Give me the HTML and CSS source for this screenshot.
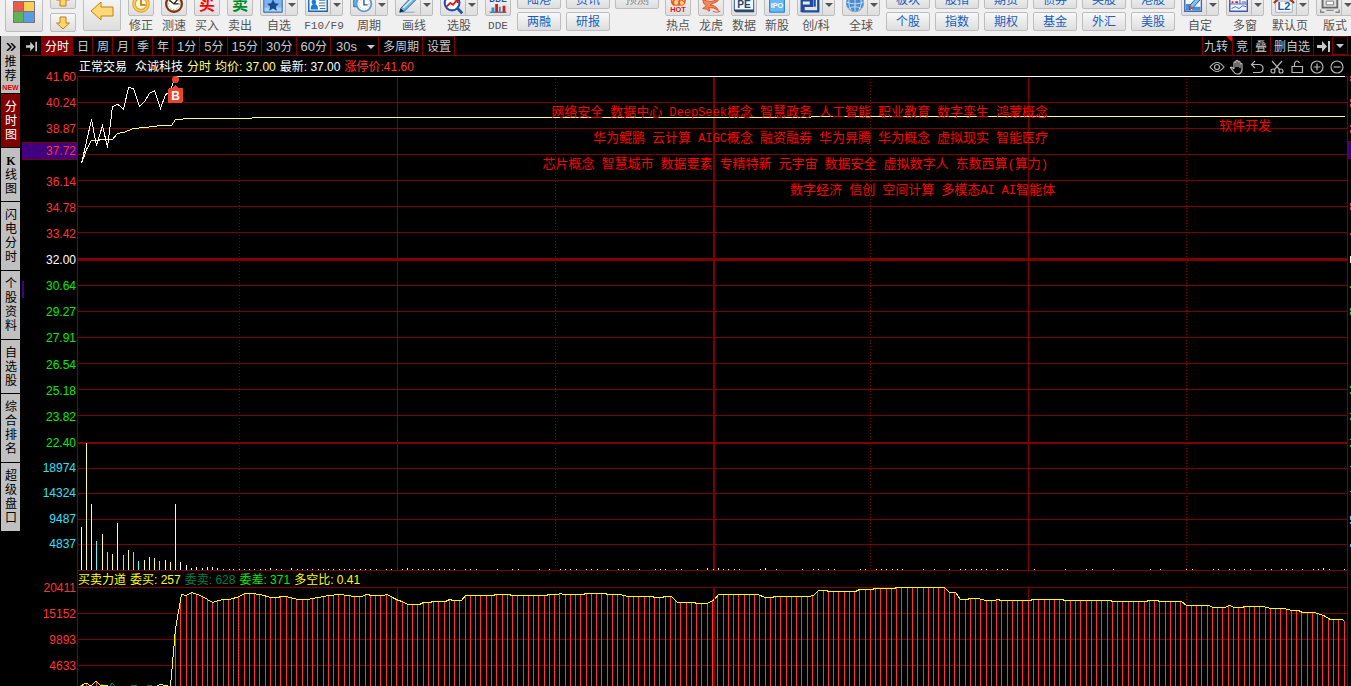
FILE: index.html
```html
<!DOCTYPE html>
<html lang="zh-CN">
<head>
<meta charset="utf-8">
<title>众诚科技 分时</title>
<link rel="stylesheet" href="styles.css">
</head>
<body>
<header class="toolbar">
  <button class="tile tile-home" aria-label="主页"><svg width="22" height="22" viewBox="0 0 22 22"><path d="M0 0h22v22H0z" fill="#777"/><path d="M1 1h9v9H1z" fill="#ea5a4e"/><path d="M11 1h10v9H11z" fill="#fbd154"/><path d="M1 11h9v10H1z" fill="#62b154"/><path d="M11 11h10v10H11z" fill="#5b9be6"/></svg></button>
  <div class="pager">
    <button class="tile tile-small" aria-label="上"><svg width="16" height="14" viewBox="0 0 16 14"><path d="M8 1l6.500 6H11v6H5V7H1.500z" fill="#fdd56a" stroke="#c07f14"/></svg></button>
    <button class="tile tile-small" aria-label="下"><svg width="16" height="14" viewBox="0 0 16 14"><path d="M8 13l6.500-6H11V1H5v6H1.500z" fill="#fdd56a" stroke="#c07f14"/></svg></button>
  </div>
  <button class="tile tile-back" aria-label="返回"><svg width="24" height="20" viewBox="0 0 24 20"><path d="M1 10L11 1v5h12v9H11v4z" fill="#fdd978" stroke="#c07f14"/></svg></button>

  <button class="tool"><span class="icon"><svg viewBox="0 0 26 26"><circle cx="13" cy="14" r="7.500" fill="#fff6d8" stroke="#dc9a1e" stroke-width="4"/><circle cx="13" cy="14" r="7.500" fill="none" stroke="#f8cc60" stroke-width="2"/><path d="M13 8v7h5" fill="none" stroke="#c8821a" stroke-width="2"/></svg></span>修正</button>
  <button class="tool"><span class="icon"><svg viewBox="0 0 26 26"><circle cx="13" cy="14" r="8.500" fill="#fffdf4" stroke="#7b3514" stroke-width="2.500"/><circle cx="13" cy="14" r="6" fill="none" stroke="#888" stroke-dasharray="1 2"/><path d="M8 10l5 4h5M13 14l4-5" fill="none" stroke="#222" stroke-width="1.500"/></svg></span>测速</button>
  <button class="tool"><span class="icon"><b class="glyph red">买</b></span>买入</button>
  <button class="tool"><span class="icon"><b class="glyph green">卖</b></span>卖出</button>
  <button class="tool wide"><span class="icon"><svg viewBox="0 0 26 26"><path d="M3 5h20v18H3z" fill="#7fb5ee" stroke="#2a5c9c"/><path d="M4 18h18v4H4z" fill="#a8d0f8"/><path d="M13 9l2 4.300 4.500.5-3.400 3 1 4.500-4.100-2.300-4.100 2.300 1-4.500-3.400-3 4.500-.5z" fill="#164a8c"/></svg><i></i></span>自选</button>
  <button class="tool wide"><span class="icon"><svg viewBox="0 0 26 26"><path d="M3 5h20v17H3z" fill="#f6fbff" stroke="#1d64ae" stroke-width="1.500"/><circle cx="8.500" cy="12" r="2.500" fill="#1d7ad0"/><path d="M5 20q0-6 4-6t4 6z" fill="#1d7ad0"/><path d="M14 10h7M14 13h7M14 16h7M15 19h6" stroke="#345f91"/></svg><i></i></span><span class="latin">F10/F9</span></button>
  <button class="tool wide"><span class="icon"><svg viewBox="0 0 26 26"><path d="M3 8h4v9H3z" fill="#6bb5f2" stroke="#1863a8"/><circle cx="14" cy="14" r="8" fill="#fff" stroke="#6499cc" stroke-width="2"/><circle cx="14" cy="14" r="5.500" fill="none" stroke="#aaa" stroke-dasharray="1 2"/><path d="M14 8v7h4" fill="none" stroke="#215f9c" stroke-width="1.500"/></svg><i></i></span>周期</button>
  <button class="tool wide"><span class="icon"><svg viewBox="0 0 26 26"><path d="M5 19L18 5l4 4L9 22l-5 1z" fill="#75b6e8" stroke="#1b5e9e"/><path d="M8 18L20 7" stroke="#d9efff" stroke-width="1.500"/><path d="M4 23l1-4 4 3z" fill="#123"/><path d="M6 23h14" stroke="#8aa2bd"/></svg><i></i></span>画线</button>
  <button class="tool wide"><span class="icon"><svg viewBox="0 0 26 26"><circle cx="12" cy="13" r="8" fill="#fff" stroke="#1e4fae" stroke-width="2.200"/><path d="M18 19l5 5" stroke="#1e4fae" stroke-width="3"/><path d="M6 17l4-4 3 2 5-6M14 9h4v4" fill="none" stroke="#d91a1a" stroke-width="2"/></svg><i></i></span>选股</button>
  <button class="tool"><span class="icon"><svg viewBox="0 0 26 26"><text x="13" y="12" text-anchor="middle" class="dde">DDE</text><path d="M4 23h18" stroke="#245"/><path d="M6 18h3v5H6zM14 17h2v6h-2z" fill="#2b8fe0"/><path d="M10 14h3v9h-3zM18 16h3v7h-3z" fill="#dc1818"/></svg></span><span class="latin">DDE</span></button>

  <div class="links">
    <button>陆港</button><button>资讯</button><button class="muted">预测</button>
    <button>两融</button><button>研报</button>
  </div>

  <button class="tool"><span class="icon"><svg viewBox="0 0 26 26"><path d="M5 8q0 8 4 8h8q4 0 5-8l-3 3-2-6-4 6-4-6-2 6z" fill="#ef5a20"/><path d="M9 11q-1 4 2 4t2-4l-2-2zM16 10q-2 5 1 5t2-3z" fill="#ffd98a"/><text x="13" y="23" text-anchor="middle" class="hot">HOT</text></svg></span>热点</button>
  <button class="tool"><span class="icon"><svg viewBox="0 0 26 26"><path d="M4 9q9 5 18-1-1 4-6 5l-4 2q7 1 9 6-6-4-11-3 3 2 1 4-2-3-7-3l4-3q-4-2-4-7z" fill="#f08a5a" stroke="#df4b24"/><path d="M15 22q4 2 8 0" fill="none" stroke="#df4b24"/></svg></span>龙虎</button>
  <button class="tool"><span class="icon"><svg viewBox="0 0 26 26"><path d="M2 3h22v20H4l-2-2z" fill="#264a73"/><path d="M3 4h20v16H3z" fill="#f4f8fc"/><text x="13" y="18" text-anchor="middle" class="pe">PE</text></svg></span>数据</button>
  <button class="tool"><span class="icon"><svg viewBox="0 0 26 26"><path d="M5 4h16v19H5z" fill="#68b9f5" stroke="#1778c8"/><text x="13" y="18" text-anchor="middle" class="ipo">IPO</text></svg></span>新股</button>
  <button class="tool wide"><span class="icon"><svg viewBox="0 0 26 26"><path d="M3 10h12v6H6v6h11M4 9v14M14 10v5M18 7v10M22 7v15h-5" fill="none" stroke="#1d4ca0" stroke-width="2.500"/></svg><i></i></span>创/科</button>
  <button class="tool wide"><span class="icon"><svg viewBox="0 0 26 26"><circle cx="13" cy="13" r="9.500" fill="#4b8bd0" stroke="#8ba6c4"/><path d="M4 12q9 4 18 0M6 19q7-4 14 0M13 4v18M8 5q-4 8 1 16M18 5q4 8-1 16" fill="none" stroke="#cde4fa"/></svg><i></i></span>全球</button>

  <div class="links links-six">
    <button>板块</button><button>股指</button><button>期货</button><button>债券</button><button>英股</button><button>港股</button>
    <button>个股</button><button>指数</button><button>期权</button><button>基金</button><button>外汇</button><button>美股</button>
  </div>

  <button class="tool wide"><span class="icon"><svg viewBox="0 0 26 26"><path d="M3 5h18v17H3z" fill="#f5faff" stroke="#3f6ba8" stroke-width="1.500"/><path d="M4 14h6v7H4zM11 17h9v4h-9z" fill="#4d8bd8"/><path d="M9 15L18 5l3 3-9 10-4 2z" fill="#7cc2f5" stroke="#1f4f86"/><path d="M8 20l1-4 3 2z" fill="#e05030"/></svg><i></i></span>自定</button>
  <button class="tool wide"><span class="icon"><svg viewBox="0 0 26 26"><path d="M3 5h19v17H3z" fill="#eef4ff" stroke="#4457a8" stroke-width="1.500"/><path d="M3 14h19M14 5v9" stroke="#4457a8"/><path d="M5 19l4-2 4 2 4-3 4 1" fill="none" stroke="#2c6fd0"/><path d="M16 9h5M16 12h5" stroke="#4457a8"/><path d="M5 12h2M9 12h3" stroke="#d22" stroke-width="2"/></svg><i></i></span>多窗</button>
  <button class="tool wide"><span class="icon"><svg viewBox="0 0 26 26"><path d="M4 11h18v12H4z" fill="#f8fbff" stroke="#9ab"/><path d="M2 13L13 3l11 10" fill="none" stroke="#9c3c25" stroke-width="2.500"/><text x="13" y="21" text-anchor="middle" class="l2">L2</text></svg><i></i></span>默认页</button>
  <button class="tool wide"><span class="icon"><svg viewBox="0 0 26 26"><path d="M6 7h16v11H6z" fill="#ddd" stroke="#666" stroke-width="2"/><path d="M10 11h8v4h-8z" fill="#fff" stroke="#777"/><path d="M10 21h8M4 20v3h4M24 20v3h-4" fill="none" stroke="#888" stroke-width="1.500"/></svg><i></i></span>版式</button>
</header>

<div class="workspace">
  <nav class="side">
    <button class="promo"><svg width="10" height="8" viewBox="0 0 10 8"><path d="M1 0l4 4-4 4M5 0l4 4-4 4" fill="none" stroke="#000" stroke-width="1.500"/></svg><span>推荐</span><em>NEW</em></button>
    <button class="on">分时图</button>
    <button><b>K</b>线图</button>
    <button>闪电分时</button>
    <button>个股资料</button>
    <button>自选股</button>
    <button>综合排名</button>
    <button>超级盘口</button>
  </nav>

  <main class="main">
    <div class="tabs">
      <button class="jump" aria-label="展开"><svg width="13" height="11" viewBox="0 0 13 11"><path d="M0 4h5V0l5 5.500L5 11V7H0zM11 0h2v11h-2z" fill="#c8c8c8"/></svg></button>
      <button class="on">分时</button><button>日</button><button>周</button><button>月</button><button>季</button><button>年</button><button><u>1</u>分</button><button><u>5</u>分</button><button><u>15</u>分</button><button><u>30</u>分</button><button><u>60</u>分</button>
      <button class="seconds"><u>30s</u><i class="down"></i></button><button>多周期</button><button>设置</button>
      <div class="tabs-right">
        <button class="flag">九转</button><button>竞</button><button>叠</button><button>删自选</button><button class="jump-end" aria-label="收起"><svg width="13" height="11" viewBox="0 0 13 11"><path d="M0 4h5V0l5 5.500L5 11V7H0zM11 0h2v11h-2z" fill="#c8c8c8"/></svg></button><button class="more" aria-label="更多"><i class="down"></i></button>
      </div>
    </div>

    <div class="info">
      <span>正常交易</span><span class="stock">众诚科技</span>
      <span class="avg">分时</span><span class="avg">均价: 37.00</span>
      <span>最新: 37.00</span><span class="limit">涨停价:41.60</span>
      <div class="chart-tools">
        <button aria-label="显示"><svg viewBox="0 0 16 16"><path d="M1 8q7-9 14 0-7 9-14 0z"/><circle cx="8" cy="8" r="2.500"/></svg></button>
        <button aria-label="拖动"><svg viewBox="0 0 16 16"><path d="M5 10V3.500q1-1 2 0V8 2q1-1 2 0v6-5q1-1 2 0v6-4q1-1 2 0v6q-1 4-4 4H8q-2 0-4-3L1.500 8.500q1-1 3.500 1.500"/></svg></button>
        <button aria-label="撤销"><svg viewBox="0 0 16 16"><path d="M6 2L2.500 5.500 6 9M3 5.500h7q4 0 4 4t-4 4H4"/></svg></button>
        <button aria-label="剪切"><svg viewBox="0 0 16 16"><path d="M3 2l8 9M13 2l-8 9"/><circle cx="4" cy="12" r="2"/><circle cx="12" cy="12" r="2"/></svg></button>
        <button aria-label="锁定"><svg viewBox="0 0 16 16"><path d="M3 7.500h10.500v6H3zM5.500 7V4q2.500-4 5 0"/></svg></button>
        <button aria-label="放大"><svg viewBox="0 0 16 16"><circle cx="8" cy="8" r="6"/><path d="M4.500 8h7M8 4.500v7"/></svg></button>
        <button aria-label="缩小"><svg viewBox="0 0 16 16"><circle cx="8" cy="8" r="6"/><path d="M4.500 8h7"/></svg></button>
      </div>
    </div>

    <section class="panel price">
      <div class="axis-box">
        <ul class="axis up">
          <li>41.60</li><li>40.24</li><li>38.87</li><li></li><li>36.14</li><li>34.78</li><li>33.42</li><li class="mid">32.00</li>
          <li class="dn">30.64</li><li class="dn">29.27</li><li class="dn">27.91</li><li class="dn">26.54</li><li class="dn">25.18</li><li class="dn">23.82</li><li class="dn">22.40</li>
        </ul>
        <span class="current">37.72</span>
        <span class="stub"></span>
      </div>
      <div class="plot">
        <svg class="canvas" viewBox="77 76 1271 366" preserveAspectRatio="none">
          <path class="grid" id="price-grid"/>
          <path class="dots" id="price-dots"/>
          <path class="bold" d="M78 258h1269v3H78zM713 77h2v365h-2z"/>
          <polyline class="avg-line" id="avg-line"/>
          <polyline class="price-line" id="price-line"/>
          <circle cx="175.500" cy="79.500" r="3.500" fill="#e8432c"/>
          <path d="M172 88l3.500-3 3.500 3h2q2 0 2 2v11q0 2-2 2h-11q-2 0-2-2V90q0-2 2-2z" fill="#e8432c"/>
          <text x="175.500" y="100" text-anchor="middle" class="mark">B</text>
        </svg>
        <div class="concepts">
          <p><span>网络安全</span><span>数据中心</span><span><u>DeepSeek</u>概念</span><span>智慧政务</span><span>人工智能</span><span>职业教育</span><span>数字孪生</span><span>鸿蒙概念</span></p>
          <p><span>华为鲲鹏</span><span>云计算</span><span><u>AIGC</u>概念</span><span>融资融券</span><span>华为昇腾</span><span>华为概念</span><span>虚拟现实</span><span>智能医疗</span></p>
          <p><span>芯片概念</span><span>智慧城市</span><span>数据要素</span><span>专精特新</span><span>元宇宙</span><span>数据安全</span><span>虚拟数字人</span><span>东数西算<u>(</u>算力<u>)</u></span></p>
          <p class="last"><span>数字经济</span><span>信创</span><span>空间计算</span><span>多模态<u>AI</u></span><span><u>AI</u>智能体</span></p>
        </div>
        <span class="industry">软件开发</span>
      </div>
      <svg class="edge" viewBox="0 76 3 366" preserveAspectRatio="none"><path d="M0 141h3v18H0z" fill="#800000"/><path d="M0 142h3v16H0z" fill="#400080"/><path d="M2 76h1v2H2zM2 79h1v2H2zM2 99h1v3H2zM2 104h1v3H2zM2 125h1v2H2zM2 130h1v3H2zM2 203h1v3H2zM2 207h1v3H2zM2 233h1v2H2z" fill="#f33"/><path d="M2 256h1v7H2z" fill="#fff"/><path d="M2 286h1v2H2zM2 308h1v3H2zM2 312h1v3H2zM2 386h1v2H2zM2 392h1v2H2zM2 413h1v1H2zM2 418h1v2H2zM2 439h1v1H2z" fill="#0d0"/></svg>
    </section>

    <section class="panel volume">
      <ul class="axis vol"><li>18974</li><li>14324</li><li>9487</li><li>4837</li></ul>
      <div class="plot">
        <svg class="canvas" viewBox="77 442 1271 128" preserveAspectRatio="none">
          <path class="grid" id="vol-grid"/>
          <path class="dots" id="vol-dots"/>
          <path class="bold" d="M78 442h1269v2H78zM713 442h2v128h-2z"/>
          <path class="v-white" id="v-white"/><path class="v-yellow" id="v-yellow"/><path class="v-cyan" id="v-cyan"/>
        </svg>
      </div>
      <svg class="edge" viewBox="0 442 3 128" preserveAspectRatio="none"><path d="M2 445h1v2H2z" fill="#0d0"/><path d="M2 466h1v1H2zM2 491h1v1H2zM2 516h1v4H2zM2 522h1v2H2zM2 544h1v3H2z" fill="#2cf"/></svg>
    </section>

    <div class="caption">
      <p><span>买卖力道</span><span>委买: 257</span><span class="sell">委卖: 628</span><span class="diff">委差: 371</span><span>多空比: 0.41</span></p>
    </div>

    <section class="panel force">
      <ul class="axis up"><li>20411</li><li>15152</li><li>9893</li><li>4633</li></ul>
      <div class="plot">
        <svg class="canvas" viewBox="77 587 1271 99" preserveAspectRatio="none">
          <path class="grid" id="force-grid"/>
          <path class="dots" id="force-dots"/>
          <path class="bold" d="M713 588h2v98h-2z"/>
          <path class="f-bars" id="f-bars"/>
          <polyline class="f-green" points="80,685 83,685 84,686"/><polyline class="f-green" points="100,686 102,684 104,686 110,686 112,683 115,686"/><path class="f-green" d="M131 685.500h6M147 685.500h5"/>
          <polyline class="f-yellow" points="81,686 86,683 91,686 96,681 100,685 108,686"/>
          <polyline class="f-yellow" id="f-line"/>
        </svg>
      </div>
      <span class="edge"></span>
    </section>
  </main>
</div>
<script src="chart.js"></script>
</body>
</html>
```

FILE: styles.css
```css
* { box-sizing: border-box; }

body {
  margin: 0;
  height: 100vh;
  display: flex;
  flex-direction: column;
  overflow: hidden;
  background: #000;
  color: #fff;
  font: 12px/14px "Liberation Sans", "Noto Sans CJK SC", sans-serif;
}

button {
  margin: 0;
  padding: 0;
  border: 0;
  background: none;
  color: inherit;
  font: inherit;
  white-space: nowrap;
}

ul, p { margin: 0; padding: 0; list-style: none; }
u { text-decoration: none; }
svg { display: block; }

/* top toolbar */
.toolbar {
  flex: none;
  height: 36px;
  padding: 0 0 3px 5px;
  display: flex;
  align-items: flex-end;
  gap: 7px;
  overflow: hidden;
  background: #f0f0f0;
  color: #555;
}
.toolbar > * { flex: none; }

.tile, .icon, .links button {
  border: 1px solid #bdbdbd;
  border-radius: 2px;
  background: linear-gradient(#f8f8f8, #dedede);
}
.tile { display: flex; justify-content: center; align-items: flex-end; }
.tile-home { width: 38px; height: 38px; margin-bottom: 1px; padding-bottom: 8px; }
.tile-back { width: 38px; height: 38px; margin-bottom: 2px; padding-bottom: 9px; }
.pager { display: flex; flex-direction: column; gap: 4px; margin-bottom: 1px; }
.tile-small { width: 26px; height: 19px; align-items: center; }

.tool {
  width: 26px;
  display: flex;
  flex-direction: column;
  align-items: center;
  gap: 3px;
}
.wide { width: 38px; }
.latin { font-family: "Liberation Mono", monospace; font-size: 11px; }
.icon {
  width: 100%;
  height: 26px;
  display: flex;
  justify-content: center;
  align-items: center;
}
.icon svg { width: 24px; height: 24px; flex: none; }
.icon i {
  align-self: stretch;
  flex: 1;
  display: flex;
  align-items: center;
  justify-content: center;
  padding-top: 4px;
  border-left: 1px solid #bdbdbd;
}
.icon i::after, .down::after {
  content: "";
  display: block;
  border: 4px solid transparent;
  border-top-color: #555;
  border-bottom: 0;
}
.glyph { font-size: 16px; line-height: 16px; padding-top: 3px; }
.red { color: #f00; }
.green { color: #008a2a; }
.dde { font: bold 9px "Liberation Sans"; fill: #1c4f9c; }
.hot { font: bold 8px "Liberation Sans"; fill: #d01818; }
.pe { font: bold 11px "Liberation Sans"; fill: #264a73; }
.ipo { font: bold 8px "Liberation Sans"; fill: #fff; }
.l2 { font: bold 12px "Liberation Sans"; fill: #1e58a8; }

.links {
  display: grid;
  grid-template-columns: repeat(3, 44px);
  grid-auto-rows: 19px;
  gap: 3px 5px;
  margin: 0 -1px;
  padding-bottom: 2px;
}
.links-six { grid-template-columns: repeat(6, 44px); }
.links button { color: #1560bd; }
.links .muted { color: #888; }

/* workspace */
.workspace { flex: 1; min-height: 0; display: flex; }

.side {
  flex: none;
  width: 22px;
  padding: 0 2px 0 1px;
  display: flex;
  flex-direction: column;
  gap: 1px;
}
.side button {
  flex: none;
  padding: 6px 3px 5px 4px;
  background: #c0c0c0;
  color: #000;
  white-space: normal;
  word-break: break-all;
}
.side button:nth-child(4), .side button:nth-child(5), .side button:nth-child(7), .side button:nth-child(8) { padding-bottom: 6px; }
.side .on { background: #800000; color: #fff; }
.side b { display: block; font: bold 12px/14px "Liberation Serif", serif; }
.side .promo {
  padding: 7px 0 0;
  display: flex;
  flex-direction: column;
  align-items: center;
  height: 57px;
}
.side .promo span { width: 12px; margin-top: 4px; }
.side .promo em { font: bold 7px/8px "Liberation Sans", sans-serif; color: #d00; margin-top: 1px; }

.main { flex: 1; min-width: 0; display: flex; flex-direction: column; }

.tabs {
  flex: none;
  height: 20px;
  display: flex;
  border-bottom: 1px solid #800000;
  color: #c8c8c8;
}
.tabs button {
  display: flex;
  align-items: center;
  padding: 1px 3px 0 4px;
  border-top: 1px solid #800000;
  border-right: 1px solid #800000;
}
.tabs u { font-size: 13px; }
.tabs .on { background: #800000; color: #fff; }
.tabs .jump { width: 19px; padding-bottom: 1px; border-color: transparent; }
.tabs .seconds { width: 48px; padding-left: 5px; justify-content: space-between; }
.down::after { border-top-color: #c8c8c8; }
.tabs-right { margin-left: auto; padding-right: 3px; display: flex; }
.tabs-right button { padding: 1px 3px 0; border-top-color: transparent; }
.tabs-right .flag { border-left: 1px solid #800000; position: relative; padding: 1px 4px 0 1px; }
.flag::after {
  content: "";
  position: absolute;
  top: -1px;
  right: 0;
  border: 3px solid #f00;
  border-left-color: transparent;
  border-bottom-color: transparent;
}
.tabs-right .jump-end { padding: 0 2px 0 3px; }
.tabs-right .more { border: 1px solid #800000; border-left: 0; }

.info {
  flex: none;
  height: 20px;
  padding: 1px 3px 0 57px;
  display: flex;
  align-items: center;
  gap: 4px;
}
.stock { margin-left: 4px; }
.avg { color: #ffff80; }
.limit { color: #f33; }
.chart-tools { margin-left: auto; padding-right: 3px; display: flex; gap: 4px; }
.chart-tools svg { width: 16px; height: 16px; fill: none; stroke: #b4b4b4; stroke-width: 1.2; }

.panel { min-height: 0; display: grid; grid-template-columns: 55px 1fr 3px; }
.price { flex: 366 1 0; }
.volume { flex: 128 1 0; }
.force { flex: 99 1 0; }
.plot { position: relative; min-width: 0; min-height: 0; }
.canvas { width: 100%; height: 100%; shape-rendering: crispEdges; }
.canvas circle { shape-rendering: auto; }
.edge { width: 3px; height: 100%; }

.axis-box { position: relative; display: grid; min-height: 0; }
.axis {
  display: flex;
  flex-direction: column;
  justify-content: space-between;
  padding-right: 1px;
  text-align: right;
}
.axis, .current { font-size: 12px; }
.axis li { line-height: 26px; height: 26px; }
.up { color: #f33; }
.dn { color: #0e0; }
.mid { color: #fff; }
.price .axis { margin: -12px 0 -14px; }
.vol { color: #2de0ff; padding: 14px 1px 13px 0; }
.vol li { flex: 1; height: auto; line-height: 25px; }
.force .axis { margin-top: -12px; justify-content: flex-start; }
.current {
  position: absolute;
  top: 18%;
  left: 0;
  right: 0;
  padding-right: 1px;
  border: solid #800000;
  border-width: 1px 0;
  background: #400080;
  color: #f33;
  line-height: 16px;
  text-align: right;
}
.stub { position: absolute; top: 56%; left: 0; width: 2px; height: 17px; background: #400080; }

.grid { fill: none; stroke: #800000; stroke-width: 1; }
.dots { fill: none; stroke: #800000; stroke-width: 1; stroke-dasharray: 1 2; }
.bold { fill: #800000; }
.price-line { fill: none; stroke: #fff; }
.avg-line { fill: none; stroke: #ffff80; }
.mark { font: bold 12px "Liberation Sans", sans-serif; fill: #fff; }
.v-white { stroke: #fff; }
.v-yellow { stroke: #ffff80; }
.v-cyan { stroke: #54fcfc; }
.f-bars { stroke: #f33; }
.f-yellow { fill: none; stroke: #ff0; }
.f-green { fill: none; stroke: #008040; }

.concepts {
  position: absolute;
  top: 22px;
  right: 300px;
  color: #f00;
  font: 13px/26px "Noto Sans CJK SC", sans-serif;
}
.concepts p { display: flex; justify-content: flex-end; gap: 7px; white-space: nowrap; height: 26px; }
.concepts u { font: 12px "Liberation Mono", monospace; }
.concepts .last { margin-right: -7px; }
.industry {
  position: absolute;
  top: 43px;
  right: 77px;
  color: #f00;
  font-size: 13px;
}

.caption { flex: none; height: 17px; padding: 0 3px 0 55px; color: #ff0; }
.caption p {
  height: 17px;
  padding-top: 1px;
  display: flex;
  align-items: center;
  gap: 4px;
  border: 1px solid #800000;
  border-bottom: 0;
}
.sell { color: #008040; }
.diff { color: #0e0; }
```

FILE: chart.js
```js
const byId = (id) => document.getElementById(id);
const minuteX = (i) => Math.floor(81 + i * 5.2625);

function drawGrid(name, rows, top, bottom) {
  let d = rows.map((y) => `M77 ${y + 0.5}H1348`).join("");
  [77, 397, 1028, 1347].forEach((x) => { d += `M${x + 0.5} ${top}V${bottom}`; });
  byId(name + "-grid").setAttribute("d", d);
  byId(name + "-dots").setAttribute("d",
    [239, 555, 870, 1186].map((x) => `M${x + 0.5} ${top + 3}V${bottom}`).join(""));
}
drawGrid("price", [76, 102, 128, 154, 180, 206, 232, 285, 311, 337, 363, 389, 415], 76, 442);
drawGrid("vol", [468, 493, 519, 544], 442, 570);
drawGrid("force", [587, 613, 639, 665], 587, 686);

const points = (list) => list.map((p) => p[0] + 0.5 + "," + (p[1] + 0.5)).join(" ");

byId("price-line").setAttribute("points", points([
  [81, 163], [91, 119], [96, 145], [102, 125], [107, 147], [112, 106], [117, 104], [119, 105],
  [123, 109], [128, 87], [133, 88], [139, 106], [144, 101], [149, 93], [154, 90], [160, 108],
  [165, 94], [169, 92], [175, 76], [1344, 76]]));
byId("avg-line").setAttribute("points", points([
  [81, 163], [86, 149], [91, 140], [96, 140], [102, 139], [112, 139], [117, 133], [123, 132],
  [128, 130], [133, 128], [144, 127], [154, 126], [160, 125], [171, 125], [175, 119], [190, 118],
  [251, 118], [252, 117], [810, 117], [811, 116], [1344, 116]]));

const volume = [
  [527, "w"], [443, "y"], [504, "y"], [541, "c"], [534, "y"], [552, "c"], [554, "y"], [523, "y"],
  [555, "c"], [550, "y"], [552, "c"], [561, "c"], [560, "y"], [557, "y"], [558, "y"], [561, "c"],
  [560, "y"], [562, "y"], [504, "y"], [562, "w"], [565, "w"], [568, "w"], [567, "w"], [568, "w"],
  [567, "w"], [567, "w"], [568, "w"]];
const ticks = [
  223, 229, 233, 239, 244, 249, 254, 260, 265, 276, 281, 297, 302, 307, 312, 318, 323, 328, 333,
  339, 344, 349, 354, 360, 365, 370, 376, 386, 391, 402, 412, 418, 423, 428, 433, 439, 444, 449,
  454, 465, 470, 476, 497, 512, 518, 539, 549, 560, 565, 570, 576, 586, 591, 597, 607, 618, 623,
  628, 639, 655, 660, 665, 676, 681, 697, 713, 723, 728, 734, 739, 760, 776, 802, 813, 818, 828,
  834, 860, 865, 876, 881, 886, 892, 897, 902, 923, 934, 949, 960, 965, 971, 976, 981, 986, 997,
  1002, 1007, 1034, 1065, 1086, 1092, 1113, 1150, 1160, 1186, 1192, 1213, 1218, 1229, 1234, 1244,
  1250, 1265, 1271, 1281, 1286, 1292, 1302, 1313, 1318, 1329, 1344];
const tall = [270, 291, 407, 707, 718, 765, 1323];
const bars = { w: "", y: "", c: "" };
volume.forEach(([top, key], i) => { bars[key] += `M${minuteX(i) + 0.5} ${top}V570`; });
ticks.forEach((x) => { bars.w += `M${x + 0.5} 569V570`; });
tall.forEach((x) => { bars.w += `M${x + 0.5} 568V570`; });
byId("v-white").setAttribute("d", bars.w);
byId("v-yellow").setAttribute("d", bars.y);
byId("v-cyan").setAttribute("d", bars.c);

const force = [
  [157, 685], [160, 684], [165, 685], [170, 686], [175, 628], [181, 594], [186, 595], [191, 592],
  [197, 594], [202, 596], [207, 599], [212, 602], [218, 600], [223, 599], [229, 599], [239, 596],
  [244, 593], [250, 593], [260, 594], [270, 597], [276, 597], [282, 596], [286, 596], [297, 599],
  [307, 599], [328, 595], [340, 594], [354, 596], [361, 596], [366, 594], [372, 595], [382, 595],
  [387, 594], [392, 597], [398, 600], [402, 601], [407, 604], [419, 604], [423, 602], [430, 602],
  [432, 601], [445, 601], [449, 599], [453, 600], [461, 600], [465, 595], [493, 595], [495, 594],
  [509, 594], [511, 595], [546, 595], [548, 594], [557, 594], [560, 593], [563, 594], [583, 594],
  [585, 593], [605, 593], [607, 594], [620, 594], [627, 596], [652, 596], [654, 597], [662, 597],
  [664, 596], [671, 596], [677, 602], [694, 602], [696, 603], [707, 603], [714, 599], [718, 594],
  [757, 594], [765, 597], [772, 597], [774, 596], [808, 596], [813, 595], [818, 590], [826, 590],
  [828, 591], [855, 591], [859, 589], [872, 589], [874, 588], [894, 588], [896, 587], [944, 587],
  [949, 592], [955, 592], [960, 599], [967, 599], [969, 598], [978, 598], [985, 600], [994, 600],
  [997, 599], [1001, 600], [1030, 600], [1032, 599], [1062, 599], [1064, 600], [1110, 600],
  [1112, 601], [1146, 601], [1148, 600], [1157, 600], [1159, 601], [1181, 601], [1186, 605],
  [1208, 605], [1213, 607], [1224, 607], [1229, 605], [1234, 607], [1242, 607], [1244, 606],
  [1263, 606], [1270, 608], [1283, 608], [1292, 610], [1298, 610], [1302, 612], [1314, 612],
  [1323, 615], [1330, 619], [1341, 619], [1344, 620]];
byId("f-line").setAttribute("points", points(force));

function forceAt(x) {
  const k = Math.max(1, force.findIndex((p) => p[0] >= x));
  const [a, b] = [force[k - 1], force[k]];
  return Math.round(a[1] + (b[1] - a[1]) * (x - a[0]) / (b[0] - a[0]));
}
let forceBars = "M86.5 684V686M96.5 682V686";
for (let i = 18; i <= 240; i++) {
  const x = minuteX(i);
  forceBars += `M${x + 0.5} ${forceAt(x) + 1}V686`;
}
byId("f-bars").setAttribute("d", forceBars);
```
